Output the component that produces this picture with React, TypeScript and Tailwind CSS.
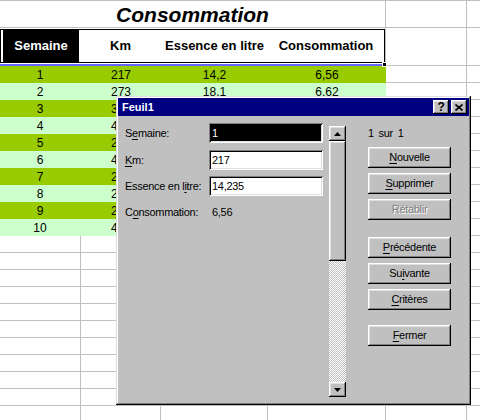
import React from "react";

// Excel 97 sheet with the "Feuil1" data form open on top

const ROWS = [
  { cells: ["1", "217", "14,2", "6,56"], h: "h-[17px]", bg: "bg-[#99cc00]" },
  { cells: ["2", "273", "18,1", "6,62"], h: "h-[17px]", bg: "bg-[#ccffcc]" },
  { cells: ["3", "318", "21,4", "6,73"], h: "h-[17px]", bg: "bg-[#99cc00]" },
  { cells: ["4", "402", "25,8", "6,42"], h: "h-[17px]", bg: "bg-[#ccffcc]" },
  { cells: ["5", "256", "16,9", "6,60"], h: "h-[17px]", bg: "bg-[#99cc00]" },
  { cells: ["6", "421", "27,3", "6,48"], h: "h-[17px]", bg: "bg-[#ccffcc]" },
  { cells: ["7", "238", "15,7", "6,60"], h: "h-[17px]", bg: "bg-[#99cc00]" },
  { cells: ["8", "265", "17,2", "6,49"], h: "h-[17px]", bg: "bg-[#ccffcc]" },
  { cells: ["9", "281", "18,6", "6,62"], h: "h-[17px]", bg: "bg-[#99cc00]" },
  { cells: ["10", "447", "28,9", "6,47"], h: "h-[17px]", bg: "bg-[#ccffcc]" },
];

const COLS = ["w-[81px]", "w-[80px]", "w-[107px]", "w-[118px]"];

const raised =
  "shadow-[inset_-1px_-1px_#000,inset_1px_1px_#fff,inset_-2px_-2px_#808080,inset_2px_2px_#dfdfdf]";
const sunken =
  "shadow-[inset_1px_1px_#808080,inset_-1px_-1px_#fff,inset_2px_2px_#000,inset_-2px_-2px_#dfdfdf]";
const frame =
  "shadow-[inset_-1px_-1px_#000,inset_1px_1px_#dfdfdf,inset_-2px_-2px_#808080,inset_2px_2px_#fff]";

function Acc({ text, at }: { text: string; at: number }) {
  if (at < 0) return <>{text}</>;
  return (
    <>
      {text.slice(0, at)}
      <span className="underline underline-offset-[2px]">{text[at]}</span>
      {text.slice(at + 1)}
    </>
  );
}

function BlankRow({ first }: { first?: boolean }) {
  return (
    <div className={`flex ${first ? "h-[17px]" : "h-[17px]"}`}>
      {COLS.map((w, i) => (
        <div key={i} className={`${w} shrink-0 border-r border-b border-[#c0c0c0]`} />
      ))}
      <div className="w-[81px] shrink-0 border-r border-b border-[#c0c0c0]" />
      <div className="flex-1 border-b border-[#c0c0c0]" />
    </div>
  );
}

function Sheet() {
  return (
    <div className="flex flex-col border-t border-[#c0c0c0] text-black">
      {/* title row */}
      <div className="flex h-[27px]">
        <div className="w-[386px] shrink-0 border-r border-b border-[#c0c0c0] flex items-center justify-center">
          <span className="text-[21px] font-bold italic leading-none">Consommation</span>
        </div>
        <div className="w-[81px] shrink-0 border-r border-b border-[#c0c0c0]" />
        <div className="flex-1 border-b border-[#c0c0c0]" />
      </div>

      {/* header row */}
      <div className="flex h-[38px]">
        <div className="w-[386px] shrink-0 border-r border-[#c0c0c0] flex flex-col">
          <div className="h-[1px]" />
          <div className="w-[385px] h-[34px] border border-black flex text-[13px] font-bold">
            <div className="w-[79px] shrink-0 flex">
              <div className="ml-[2px] w-[76px] bg-black text-white flex items-center justify-center">
                Semaine
              </div>
            </div>
            <div className="w-[81px] shrink-0 flex items-center justify-center">Km</div>
            <div className="w-[107px] shrink-0 flex items-center justify-center">Essence en litre</div>
            <div className="flex-1 flex items-center justify-center">Consommation</div>
          </div>
          <div className="h-[1px]" />
          <div className="w-[385px] h-[2px] bg-[#6666ff]" />
        </div>
        <div className="w-[81px] shrink-0 border-r border-b border-[#c0c0c0]" />
        <div className="flex-1 border-b border-[#c0c0c0]" />
      </div>

      {/* data */}
      {ROWS.map((r, i) => (
        <div key={i} className={`flex ${r.h} text-[12px]`}>
          <div className={`w-[386px] shrink-0 flex ${r.bg}`}>
            {r.cells.map((c, j) => (
              <div
                key={j}
                className={`${j === 3 ? "w-[118px]" : COLS[j]} shrink-0 flex items-center justify-center ${
                  j === 0 ? "pr-[1px]" : ""
                }`}
              >
                {c}
              </div>
            ))}
          </div>
          <div className="w-[81px] shrink-0 border-r border-b border-[#c0c0c0]" />
          <div className="flex-1 border-b border-[#c0c0c0]" />
        </div>
      ))}

      {Array.from({ length: 11 }).map((_, i) => (
        <BlankRow key={i} first={i === 0} />
      ))}
    </div>
  );
}

function ScrollArrow({ up }: { up?: boolean }) {
  return (
    <div className={`h-[15px] bg-[#c0c0c0] flex items-center justify-center ${raised}`}>
      <svg width="7" height="4" viewBox="0 0 7 4">
        {up ? <polygon points="3.5,0 7,4 0,4" fill="#000" /> : <polygon points="0,0 7,0 3.5,4" fill="#000" />}
      </svg>
    </div>
  );
}

function WinButton({ text, at, disabled }: { text: string; at: number; disabled?: boolean }) {
  return (
    <div
      className={`h-[21px] w-[83px] flex items-center justify-center bg-[#c0c0c0] ${raised} ${
        disabled ? "text-[#808080] [text-shadow:1px_1px_#fff]" : "text-black"
      }`}
    >
      <Acc text={text} at={at} />
    </div>
  );
}

function DataForm() {
  return (
    <div
      className={`absolute left-[116px] top-[96px] w-[355px] h-[309px] p-[2px] bg-[#c0c0c0] text-[11px] tracking-[-0.3px] ${frame}`}
    >
      <div className="h-[18px] bg-[#000080] flex items-center pl-[4px] pr-[2px]">
        <span className="text-white font-bold tracking-normal">Feuil1</span>
        <div className="ml-auto flex gap-[2px]">
          <div className={`w-[16px] h-[14px] bg-[#c0c0c0] flex items-center justify-center font-bold text-[12px] leading-none ${raised}`}>
            ?
          </div>
          <div className={`w-[16px] h-[14px] bg-[#c0c0c0] flex items-center justify-center ${raised}`}>
            <svg width="8" height="7" viewBox="0 0 8 7">
              <path d="M0.5 0.5 L7.5 6.5 M7.5 0.5 L0.5 6.5" stroke="#000" strokeWidth="1.6" />
            </svg>
          </div>
        </div>
      </div>

      <div className="flex items-start">
        {/* fields */}
        <div className="ml-[7px] mt-[7px] w-[198px] flex flex-col">
          <div className="h-[20px] flex items-center">
            <span><Acc text="Semaine:" at={1} /></span>
            <div className={`ml-auto w-[114px] h-[20px] pl-[3px] flex items-center bg-black text-white ${sunken}`}>
              1
            </div>
          </div>
          <div className="mt-[7px] h-[20px] flex items-center">
            <span><Acc text="Km:" at={0} /></span>
            <div className={`ml-auto w-[114px] h-[20px] pl-[3px] flex items-center bg-white ${sunken}`}>217</div>
          </div>
          <div className="mt-[6px] h-[20px] flex items-center">
            <span><Acc text="Essence en litre:" at={12} /></span>
            <div className={`ml-auto w-[114px] h-[20px] pl-[3px] flex items-center bg-white ${sunken}`}>14,235</div>
          </div>
          <div className="mt-[6px] h-[20px] flex items-center">
            <span><Acc text="Consommation:" at={1} /></span>
            <div className="ml-auto w-[114px] pl-[3px]">6,56</div>
          </div>
        </div>

        {/* scroll bar */}
        <div className="ml-[6px] mt-[10px] w-[17px] h-[271px] flex flex-col">
          <ScrollArrow up />
          <div className={`h-[120px] bg-[#c0c0c0] ${raised}`} />
          <div className="flex-1 bg-[repeating-conic-gradient(#c0c0c0_0_25%,#ffffff_0_50%)] bg-[length:2px_2px]" />
          <ScrollArrow />
        </div>

        {/* buttons */}
        <div className="ml-[22px] mt-[10px] w-[83px] flex flex-col">
          <div className="h-[14px] leading-[14px] [word-spacing:2px]">1 sur 1</div>
          <div className="mt-[7px] flex flex-col gap-[5px]">
            <WinButton text="Nouvelle" at={0} />
            <WinButton text="Supprimer" at={0} />
            <WinButton text="Rétablir" at={-1} disabled />
          </div>
          <div className="mt-[17px] flex flex-col gap-[5px]">
            <WinButton text="Précédente" at={0} />
            <WinButton text="Suivante" at={2} />
            <WinButton text="Critères" at={0} />
          </div>
          <div className="mt-[15px]">
            <WinButton text="Fermer" at={0} />
          </div>
        </div>
      </div>
    </div>
  );
}

export default function App() {
  return (
    <div className="relative w-[480px] h-[420px] overflow-hidden bg-white font-['Liberation_Sans',Arial,sans-serif]">
      <Sheet />
      <div className="absolute left-[382px] top-[62px] w-[5px] h-[5px] bg-black border border-white" />
      <DataForm />
    </div>
  );
}
